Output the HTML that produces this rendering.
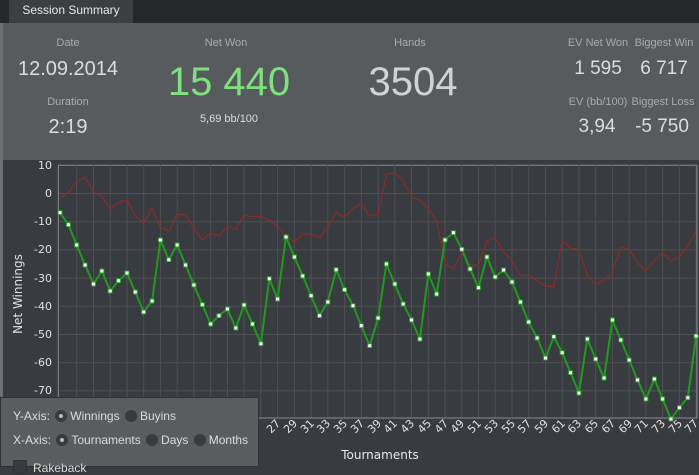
<!DOCTYPE html>
<html><head><meta charset="utf-8"><style>
body{margin:0;width:699px;height:465px;overflow:hidden;background:#383b3f;font-family:"Liberation Sans","DejaVu Sans",sans-serif;position:relative}
.top{position:absolute;left:0;top:0;width:699px;height:23px;background:#25282b}
.tab{position:absolute;left:9px;top:0;width:124px;height:23px;background:#3b3f42;color:#e8e8e8;font-size:12px;line-height:20px;text-align:center}
.sum{position:absolute;left:0;top:23px;width:699px;height:137px;background:#585b5e;border-left:3px solid #6d7073;box-sizing:border-box}
.t{position:absolute;text-align:center;white-space:nowrap;transform:translateX(-50%)}
.l{font-size:11px;color:#a9acae}
.v{color:#dcdcdc}
.ov{position:absolute;left:0;top:397px;width:259px;height:70px;background:#5a5d60;border:1px solid #2f3134;box-sizing:border-box;color:#dcdcdc;font-size:12px}
.r{display:inline-block;width:12px;height:12px;border-radius:50%;background:#383b3e;vertical-align:-2px;margin:0 3px 0 2px;position:relative}
.r.on::after{content:"";position:absolute;left:4px;top:4px;width:4px;height:4px;border-radius:50%;background:#bbb}
svg text{font-family:"DejaVu Sans",sans-serif}
</style></head><body>
<div class="top"><div class="tab">Session Summary</div></div>
<div class="sum">
<div class="t l" style="left:65px;top:14px">Date</div>
<div class="t v" style="left:65px;top:35px;font-size:20px">12.09.2014</div>
<div class="t l" style="left:65px;top:73px">Duration</div>
<div class="t v" style="left:65px;top:93px;font-size:20px">2:19</div>
<div class="t l" style="left:223px;top:14px">Net Won</div>
<div class="t" style="left:226px;top:37px;font-size:40px;color:#7fe07f">15 440</div>
<div class="t v" style="left:226px;top:90px;font-size:11px">5,69 bb/100</div>
<div class="t l" style="left:407px;top:14px">Hands</div>
<div class="t" style="left:410px;top:37px;font-size:40px;color:#d2d2d2">3504</div>
<div class="t l" style="left:595px;top:14px">EV Net Won</div>
<div class="t v" style="left:595px;top:35px;font-size:19px">1 595</div>
<div class="t l" style="left:661px;top:14px">Biggest Win</div>
<div class="t v" style="left:661px;top:35px;font-size:19px">6 717</div>
<div class="t l" style="left:595px;top:73px">EV (bb/100)</div>
<div class="t v" style="left:594px;top:93px;font-size:19px">3,94</div>
<div class="t l" style="left:660px;top:73px">Biggest Loss</div>
<div class="t v" style="left:659px;top:93px;font-size:19px">-5 750</div>
</div>
<div style="position:absolute;left:0;top:160px;width:3px;height:305px;background:#6d7073"></div>
<svg style="position:absolute;left:0;top:0" width="699" height="465">
<defs><marker id="m" markerWidth="5" markerHeight="5" refX="2.5" refY="2.5" markerUnits="userSpaceOnUse"><rect x="0.5" y="0.5" width="4" height="4" fill="#fff" stroke="#2a9a2a" stroke-width="1"/></marker></defs>
<g stroke="#4e5154" stroke-width="1">
<line x1="58" y1="165.3" x2="697" y2="165.3" stroke="#8a8c8e"/>
<line x1="58" y1="193.5" x2="697" y2="193.5"/><line x1="58" y1="221.7" x2="697" y2="221.7"/><line x1="58" y1="249.9" x2="697" y2="249.9"/><line x1="58" y1="278.1" x2="697" y2="278.1"/><line x1="58" y1="306.3" x2="697" y2="306.3"/><line x1="58" y1="334.5" x2="697" y2="334.5"/><line x1="58" y1="362.7" x2="697" y2="362.7"/><line x1="58" y1="390.9" x2="697" y2="390.9"/>
<line x1="76.7" y1="165" x2="76.7" y2="418"/><line x1="93.5" y1="165" x2="93.5" y2="418"/><line x1="110.2" y1="165" x2="110.2" y2="418"/><line x1="127" y1="165" x2="127" y2="418"/><line x1="143.7" y1="165" x2="143.7" y2="418"/><line x1="160.4" y1="165" x2="160.4" y2="418"/><line x1="177.2" y1="165" x2="177.2" y2="418"/><line x1="193.9" y1="165" x2="193.9" y2="418"/><line x1="210.7" y1="165" x2="210.7" y2="418"/><line x1="227.4" y1="165" x2="227.4" y2="418"/><line x1="244.1" y1="165" x2="244.1" y2="418"/><line x1="260.9" y1="165" x2="260.9" y2="418"/><line x1="277.6" y1="165" x2="277.6" y2="418"/><line x1="294.4" y1="165" x2="294.4" y2="418"/><line x1="311.1" y1="165" x2="311.1" y2="418"/><line x1="327.8" y1="165" x2="327.8" y2="418"/><line x1="344.6" y1="165" x2="344.6" y2="418"/><line x1="361.3" y1="165" x2="361.3" y2="418"/><line x1="378.1" y1="165" x2="378.1" y2="418"/><line x1="394.8" y1="165" x2="394.8" y2="418"/><line x1="411.5" y1="165" x2="411.5" y2="418"/><line x1="428.3" y1="165" x2="428.3" y2="418"/><line x1="445" y1="165" x2="445" y2="418"/><line x1="461.8" y1="165" x2="461.8" y2="418"/><line x1="478.5" y1="165" x2="478.5" y2="418"/><line x1="495.2" y1="165" x2="495.2" y2="418"/><line x1="512" y1="165" x2="512" y2="418"/><line x1="528.7" y1="165" x2="528.7" y2="418"/><line x1="545.5" y1="165" x2="545.5" y2="418"/><line x1="562.2" y1="165" x2="562.2" y2="418"/><line x1="578.9" y1="165" x2="578.9" y2="418"/><line x1="595.7" y1="165" x2="595.7" y2="418"/><line x1="612.4" y1="165" x2="612.4" y2="418"/><line x1="629.2" y1="165" x2="629.2" y2="418"/><line x1="645.9" y1="165" x2="645.9" y2="418"/><line x1="662.6" y1="165" x2="662.6" y2="418"/><line x1="679.4" y1="165" x2="679.4" y2="418"/><line x1="696.1" y1="165" x2="696.1" y2="418"/>
<line x1="58.3" y1="165" x2="58.3" y2="418" stroke="#8a8c8e"/>
<line x1="58" y1="418" x2="697" y2="418" stroke="#8a8c8e"/>
<line x1="697" y1="165" x2="697" y2="418" stroke="#8a8c8e"/>
</g>
<polyline fill="none" stroke="#8e2a2a" stroke-width="1.2" points="60,198.3 68.4,192.3 76.7,181.7 85.1,177.3 93.5,191.7 101.9,196.7 110.2,208.3 118.6,202.7 127,200 135.3,216 143.7,222.7 152.1,208.3 160.4,227.7 168.8,231 177.2,214 185.6,215.3 193.9,228.3 202.3,240 210.7,233.3 219,236 227.4,226.7 235.8,229.3 244.1,215 252.5,216.7 260.9,216.7 269.3,220 277.6,226.7 286,235 294.4,242.7 302.7,234 311.1,234 319.5,237.7 327.8,226.7 336.2,212.3 344.6,217.3 353,208.3 361.3,204 369.7,216 378.1,214 386.4,174.7 394.8,172.7 403.2,181 411.5,197.3 419.9,200 428.3,208.3 436.7,221 445,264 453.4,269 461.8,253.3 470.1,265 478.5,265 486.9,241 495.2,237.7 503.6,251.7 512,260.7 520.4,275.7 528.7,275 537.1,280.7 545.5,286 553.8,287 562.2,240.3 570.6,248.3 578.9,249.3 587.3,275.7 595.7,284.3 604.1,280 612.4,272.3 620.8,247.3 629.2,249.3 637.5,262.7 645.9,270.7 654.3,260.7 662.6,252.7 671,261 679.4,256.3 687.8,246 696.1,231"/>
<polyline fill="none" stroke="#1f9a1f" stroke-width="2" marker-start="url(#m)" marker-mid="url(#m)" marker-end="url(#m)" points="60,212.7 68.4,224.7 76.7,245 85.1,265 93.5,284 101.9,271 110.2,291 118.6,280.7 127,273 135.3,292 143.7,312 152.1,301 160.4,240 168.8,259.7 177.2,245 185.6,265 193.9,285 202.3,304.7 210.7,324 219,315.7 227.4,309 235.8,328 244.1,305 252.5,324 260.9,343.7 269.3,278.7 277.6,299 286,237 294.4,257 302.7,276 311.1,295.7 319.5,315.7 327.8,302 336.2,269.7 344.6,289.7 353,305.7 361.3,325.7 369.7,345.7 378.1,318 386.4,264 394.8,284 403.2,304 411.5,320 419.9,339 428.3,274 436.7,294 445,240 453.4,232.7 461.8,249.3 470.1,269 478.5,287.7 486.9,257 495.2,277 503.6,270 512,282 520.4,302 528.7,322 537.1,338 545.5,358 553.8,336.7 562.2,352.7 570.6,372.7 578.9,393 587.3,339 595.7,359 604.1,378 612.4,320 620.8,340 629.2,360 637.5,380 645.9,399 654.3,379 662.6,399 671,419 679.4,407.7 687.8,397.7 696.1,336"/>
<g fill="#e0e0e0" font-size="11" text-anchor="end">
<text x="52" y="169">10</text><text x="52" y="197">0</text><text x="52" y="225">-10</text><text x="52" y="253">-20</text><text x="52" y="282">-30</text><text x="52" y="310">-40</text><text x="52" y="338">-50</text><text x="52" y="366">-60</text><text x="52" y="394">-70</text>
</g>
<text transform="translate(22,294) rotate(-90)" fill="#e0e0e0" font-size="12" text-anchor="middle">Net Winnings</text>
<text x="380" y="459" fill="#e8e8e8" font-size="12" text-anchor="middle">Tournaments</text>
<g fill="#e0e0e0" font-size="11" text-anchor="end">
<text transform="translate(281,424) rotate(-45)">27</text><text transform="translate(298,424) rotate(-45)">29</text><text transform="translate(315,424) rotate(-45)">31</text><text transform="translate(331,424) rotate(-45)">33</text><text transform="translate(348,424) rotate(-45)">35</text><text transform="translate(365,424) rotate(-45)">37</text><text transform="translate(382,424) rotate(-45)">39</text><text transform="translate(398,424) rotate(-45)">41</text><text transform="translate(415,424) rotate(-45)">43</text><text transform="translate(432,424) rotate(-45)">45</text><text transform="translate(449,424) rotate(-45)">47</text><text transform="translate(465,424) rotate(-45)">49</text><text transform="translate(482,424) rotate(-45)">51</text><text transform="translate(499,424) rotate(-45)">53</text><text transform="translate(516,424) rotate(-45)">55</text><text transform="translate(532,424) rotate(-45)">57</text><text transform="translate(549,424) rotate(-45)">59</text><text transform="translate(566,424) rotate(-45)">61</text><text transform="translate(582,424) rotate(-45)">63</text><text transform="translate(599,424) rotate(-45)">65</text><text transform="translate(616,424) rotate(-45)">67</text><text transform="translate(633,424) rotate(-45)">69</text><text transform="translate(649,424) rotate(-45)">71</text><text transform="translate(666,424) rotate(-45)">73</text><text transform="translate(683,424) rotate(-45)">75</text><text transform="translate(699,424) rotate(-45)">77</text>
</g>
</svg>
<div class="ov">
<div style="position:absolute;left:12px;top:11px;white-space:nowrap">Y-Axis: <span class="r on"></span>Winnings <span class="r"></span>Buyins</div>
<div style="position:absolute;left:12px;top:35px;white-space:nowrap">X-Axis: <span class="r on"></span>Tournaments <span class="r"></span>Days <span class="r"></span>Months</div>
<div style="position:absolute;left:12px;top:62px;white-space:nowrap"><span style="display:inline-block;width:12px;height:12px;background:#383b3e;border:1px solid #2e3033;vertical-align:-2px;margin-right:6px"></span>Rakeback</div>
</div>
</body></html>
